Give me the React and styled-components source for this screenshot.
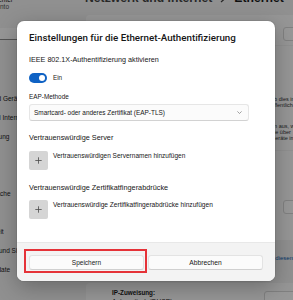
import React from "react";
import styled, { createGlobalStyle } from "styled-components";

const Global = createGlobalStyle`
  html, body { margin: 0; padding: 0; }
  body {
    width: 293px; height: 300px; overflow: hidden;
    font-family: "Segoe UI", "Liberation Sans", Arial, sans-serif;
    color: #1a1a1a;
  }
  * { box-sizing: border-box; }
`;

const Page = styled.div`
  position: relative;
  width: 293px;
  height: 300px;
  overflow: hidden;
  background: #f0f0f0;
  display: flex;
`;

/* ---------- background settings window ---------- */
const Sidebar = styled.nav`
  width: 86px;
  flex: none;
  overflow: hidden;
`;

const SideInner = styled.div`
  margin-left: -39px;
  width: 125px;
  display: flex;
  flex-direction: column;
`;

const Profile = styled.div`
  margin-top: -4px;
  width: 52px;
  display: flex;
  flex-direction: column;
  align-items: flex-end;
  font-size: 6.5px;
  line-height: 7px;
  white-space: nowrap;
`;

const ProfileLine = styled.span`
  padding-right: ${(p) => p.$pad || 0}px;
  color: ${(p) => (p.$muted ? "#555" : "#1a1a1a")};
`;

const SearchBox = styled.div`
  margin-top: 18px;
  margin-left: -10px;
  width: 120px;
  height: 12px;
  background: #fbfbfb;
  border-radius: 3px;
  border-bottom: 1px solid #8a8a8a;
`;

const NavList = styled.div`
  margin-top: 11px;
  display: flex;
  flex-direction: column;
`;

const NavItem = styled.div`
  height: 19px;
  line-height: 19px;
  font-size: 6.5px;
  white-space: nowrap;
`;

const Main = styled.main`
  flex: none;
  width: 240px;
  display: flex;
  flex-direction: column;
`;

const Header = styled.h1`
  margin: -9px 0 0 -1px;
  height: 14px;
  display: flex;
  align-items: center;
  gap: 8px;
  font-size: 12.2px;
  line-height: 14px;
  font-weight: 700;
  white-space: nowrap;
`;

const Crumb = styled.span`
  color: ${(p) => (p.$current ? "#1a1a1a" : "#444")};
`;

const Cards = styled.div`
  margin-top: 10px;
  display: flex;
  flex-direction: column;
  gap: 1px;
`;

const Card = styled.section`
  height: ${(p) => p.$h}px;
  background: ${(p) => (p.$plain ? "transparent" : "#fbfbfb")};
  border-radius: 4px;
  display: flex;
  flex-direction: ${(p) => (p.$col ? "column" : "row")};
  padding: ${(p) => p.$pad || "0"};
`;

const CardButton = styled.div`
  width: 40px;
  height: 14px;
  margin-top: ${(p) => p.$mt || 0}px;
  background: #fdfdfd;
  border: 1px solid #d8d8d8;
  border-radius: 3px;
  flex: none;
`;

const SideText = styled.div`
  margin-top: ${(p) => p.$mt}px;
  padding-left: 185px;
  font-size: 5.5px;
  line-height: 6px;
  white-space: nowrap;
  color: #333;
`;

const LinkText = styled.div`
  padding-left: 183px;
  padding-top: 13px;
  font-size: 6px;
  line-height: 8px;
  white-space: nowrap;
  color: #0a5bb0;
`;

const InfoCol = styled.div`
  width: 178px;
  padding-left: 26px;
  display: flex;
  flex-direction: column;
  font-size: 6.5px;
  line-height: 9px;
  white-space: nowrap;
`;

const InfoLabel = styled.span`
  font-weight: ${(p) => (p.$bold ? 700 : 400)};
  font-size: ${(p) => (p.$bold ? 6.3 : 6.5)}px;
`;

const Overlay = styled.div`
  position: absolute;
  inset: 0;
  background: rgba(0, 0, 0, 0.4);
`;

/* ---------- dialog ---------- */
const Dialog = styled.div`
  position: absolute;
  left: 17px;
  top: 21px;
  width: 258px;
  height: 260px;
  background: #ffffff;
  border-radius: 7px;
  box-shadow: 0 6px 22px rgba(0, 0, 0, 0.28), 0 0 0 1px rgba(0, 0, 0, 0.06);
  overflow: hidden;
  display: flex;
  flex-direction: column;
`;

const Body = styled.div`
  flex: 1;
  padding: 11px 12px 0;
  display: flex;
  flex-direction: column;
  align-items: flex-start;
`;

const Title = styled.h2`
  margin: 0;
  font-family: Roboto, "Liberation Sans", sans-serif;
  font-weight: 500;
  font-size: 9.75px;
  line-height: 12px;
  color: #161616;
  white-space: nowrap;
`;

const Label = styled.div`
  margin-top: ${(p) => p.$mt}px;
  font-size: ${(p) => p.$size || 6.5}px;
  line-height: 10px;
  color: #161616;
  white-space: nowrap;
`;

const ToggleRow = styled.div`
  margin-top: 8px;
  height: 10px;
  display: flex;
  align-items: center;
  gap: 6px;
`;

const Toggle = styled.div`
  width: 18px;
  height: 10px;
  border-radius: 5px;
  background: #0f62c4;
  display: flex;
  align-items: center;
  justify-content: flex-end;
  padding-right: 2px;
`;

const Knob = styled.span`
  width: 6px;
  height: 6px;
  border-radius: 50%;
  background: #fff;
`;

const ToggleText = styled.span`
  font-size: 6.3px;
  line-height: 10px;
`;

const Select = styled.div`
  margin-top: 2px;
  width: 220px;
  height: 17px;
  background: #fbfbfb;
  border: 1px solid #e6e6e6;
  border-bottom-color: #d2d2d2;
  border-radius: 3px;
  display: flex;
  align-items: center;
  justify-content: space-between;
  padding: 0 6px 0 4px;
`;

const SelectText = styled.span`
  font-size: 6.45px;
  color: #161616;
  white-space: nowrap;
`;

const AddRow = styled.div`
  margin-top: ${(p) => p.$mt}px;
  display: flex;
  align-items: flex-start;
  gap: 5px;
`;

const AddButton = styled.div`
  width: 19px;
  height: 19px;
  background: #d5d5d5;
  border-radius: 2px;
  display: flex;
  align-items: center;
  justify-content: center;
`;

const AddLabel = styled.span`
  font-size: ${(p) => p.$size}px;
  line-height: 10px;
  white-space: nowrap;
  color: #161616;
`;

const Footer = styled.div`
  position: relative;
  height: 39px;
  flex: none;
  background: #f3f3f3;
  border-top: 1px solid #e8e8e8;
  padding: 12px 12px 0;
  display: grid;
  grid-template-columns: 1fr 1fr;
  gap: 4px;
  align-content: start;
`;

const FooterButton = styled.div`
  height: 15px;
  background: #fbfbfb;
  border: 1px solid #e3e3e3;
  border-bottom-color: #d0d0d0;
  border-radius: 3px;
  display: flex;
  align-items: center;
  justify-content: center;
  font-size: ${(p) => p.$size}px;
  color: #161616;
`;

const Highlight = styled.div`
  position: absolute;
  left: 7px;
  top: 6px;
  width: 123px;
  height: 24px;
  border: 2px solid #e53238;
  pointer-events: none;
`;

function Plus() {
  return (
    <svg width="7" height="7" viewBox="0 0 7 7">
      <path d="M3.5 0.3V6.7M0.3 3.5H6.7" stroke="#4a4a4a" strokeWidth="0.8" />
    </svg>
  );
}

function ChevronDown() {
  return (
    <svg width="5" height="3" viewBox="0 0 5 3">
      <path d="M0.4 0.4L2.5 2.5L4.6 0.4" fill="none" stroke="#7a7a7a" strokeWidth="0.7" />
    </svg>
  );
}

function ChevronRight() {
  return (
    <svg width="6" height="9" viewBox="0 0 6 9">
      <path d="M1 1L5 4.5L1 8" fill="none" stroke="#444" strokeWidth="1.3" />
    </svg>
  );
}

const navItems = [
  "Startseite",
  "System",
  "Bluetooth und Geräte",
  "Netzwerk und Internet",
  "Personalisierung",
  "Apps",
  "Konten",
  "Zeit und Sprache",
  "Spielen",
  "Barrierefreiheit",
  "Datenschutz und Sicherheit",
  "Windows Update",
];

export default function App() {
  return (
    <>
      <Global />
      <Page>
        <Sidebar>
          <SideInner>
            <Profile>
              <ProfileLine>Kontocenter</ProfileLine>
              <ProfileLine $pad={4} $muted>Lokales Konto</ProfileLine>
            </Profile>
            <SearchBox />
            <NavList>
              {navItems.map((n) => (
                <NavItem key={n}>{n}</NavItem>
              ))}
            </NavList>
          </SideInner>
        </Sidebar>
        <Main>
          <Header>
            <Crumb>Netzwerk und Internet</Crumb>
            <ChevronRight />
            <Crumb $current>Ethernet</Crumb>
          </Header>
          <Cards>
            <Card $h={30} $pad="12px 0 0 197px">
              <CardButton />
            </Card>
            <Card $h={104} $col>
              <SideText $mt={50}>
                ob dies in einem
                <br />
                öffentlichen Netz
              </SideText>
              <SideText $mt={15}>
                en aus, wenn
                <br />
                die über
                <br />
                Geräte im
              </SideText>
            </Card>
            <Card $h={89} $pad="49px 0 0 197px">
              <CardButton />
            </Card>
            <Card $h={41} $plain>
              <LinkText>in diesem Netzwerk</LinkText>
            </Card>
            <Card $h={40} $pad="5px 0 0 0">
              <InfoCol>
                <InfoLabel $bold>IP-Zuweisung:</InfoLabel>
                <InfoLabel>Automatisch (DHCP)</InfoLabel>
              </InfoCol>
              <CardButton $mt={3} />
            </Card>
          </Cards>
        </Main>
        <Overlay />
        <Dialog>
          <Body>
            <Title>Einstellungen für die Ethernet-Authentifizierung</Title>
            <Label $mt={11} $size={7.2}>IEEE 802.1X-Authentifizierung aktivieren</Label>
            <ToggleRow>
              <Toggle>
                <Knob />
              </Toggle>
              <ToggleText>Ein</ToggleText>
            </ToggleRow>
            <Label $mt={9} $size={6.4}>EAP-Methode</Label>
            <Select>
              <SelectText>Smartcard- oder anderes Zertifikat (EAP-TLS)</SelectText>
              <ChevronDown />
            </Select>
            <Label $mt={12} $size={7.3}>Vertrauenswürdige Server</Label>
            <AddRow $mt={8}>
              <AddButton>
                <Plus />
              </AddButton>
              <AddLabel $size={6.5}>Vertrauenswürdigen Servernamen hinzufügen</AddLabel>
            </AddRow>
            <Label $mt={13} $size={7.3}>Vertrauenswürdige Zertifikatfingerabdrücke</Label>
            <AddRow $mt={7}>
              <AddButton>
                <Plus />
              </AddButton>
              <AddLabel $size={6.6}>Vertrauenswürdige Zertifikatfingerabdrücke hinzufügen</AddLabel>
            </AddRow>
          </Body>
          <Footer>
            <FooterButton $size={6.5}>Speichern</FooterButton>
            <FooterButton $size={6.7}>Abbrechen</FooterButton>
            <Highlight />
          </Footer>
        </Dialog>
      </Page>
    </>
  );
}
